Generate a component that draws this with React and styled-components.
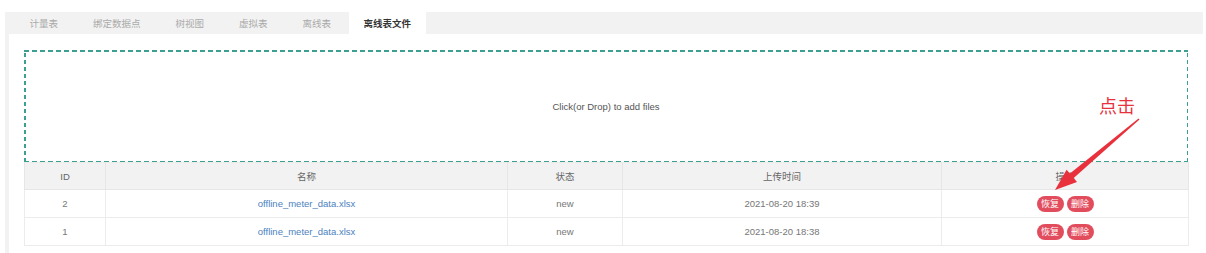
import React from "react";
import styled, { createGlobalStyle } from "styled-components";

const GlobalStyle = createGlobalStyle`
  body {
    margin: 0;
    background: #fff;
    font-family: "Liberation Sans", "Noto Sans CJK SC", sans-serif;
  }
`;

const tabs = ["计量表", "绑定数据点", "树视图", "虚拟表", "离线表", "离线表文件"];

const files = [
  { id: 2, name: "offline_meter_data.xlsx", status: "new", time: "2021-08-20 18:39" },
  { id: 1, name: "offline_meter_data.xlsx", status: "new", time: "2021-08-20 18:38" },
];

const columns = [
  { title: "ID", width: 81 },
  { title: "名称", width: 402 },
  { title: "状态", width: 115 },
  { title: "上传时间", width: 319 },
  { title: "操作", width: 247 },
];

const App = () => {
  return (
    <>
      <GlobalStyle />
      <Page>
        <TabBar>
          {tabs.map((t, i) => (
            <Tab key={t} active={i === tabs.length - 1}>
              {t}
            </Tab>
          ))}
        </TabBar>
        <Panel>
          <DropZone>Click(or Drop) to add files</DropZone>
          <Table>
            <colgroup>
              {columns.map((c) => (
                <col key={c.title} style={{ width: c.width }} />
              ))}
            </colgroup>
            <thead>
              <tr>
                {columns.map((c) => (
                  <Th key={c.title}>{c.title}</Th>
                ))}
              </tr>
            </thead>
            <tbody>
              {files.map((f) => (
                <tr key={f.id}>
                  <Td>{f.id}</Td>
                  <Td>
                    <FileLink>{f.name}</FileLink>
                  </Td>
                  <Td>{f.status}</Td>
                  <Td>{f.time}</Td>
                  <Td>
                    <Actions>
                      <PillButton>恢复</PillButton>
                      <PillButton>删除</PillButton>
                    </Actions>
                  </Td>
                </tr>
              ))}
            </tbody>
          </Table>
        </Panel>
        <Annotation>
          <Note>点击</Note>
          <svg width="100" height="90" viewBox="0 0 100 90">
            <polygon
              points="84.5,0.4 85.5,1.6 19.7,60.1 23,63.9 1,72 12.6,51.7 15.9,55.5"
              fill="#e8313c"
            />
          </svg>
        </Annotation>
      </Page>
    </>
  );
};

const Page = styled.div`
  position: relative;
  padding: 12px 3px 0 5px;
  height: 253px;
  box-sizing: border-box;
`;

const TabBar = styled.div`
  display: flex;
  height: 22px;
  padding-left: 7px;
  background: #f2f2f2;
`;

const Tab = styled.div`
  display: flex;
  align-items: center;
  padding: 0 ${(p) => (p.active ? "15px" : "17.5px")};
  font-size: 9.5px;
  font-weight: ${(p) => (p.active ? 700 : 400)};
  color: ${(p) => (p.active ? "#333" : "#aaa")};
  background: ${(p) => (p.active ? "#fff" : "transparent")};
`;

const Panel = styled.div`
  display: flex;
  flex-direction: column;
  padding: 16px 15px 0 15px;
  border-left: 4px solid #f2f2f2;
  background: #fff;
  height: 219px;
  box-sizing: border-box;
`;

const dash = "#3d9e92";

const DropZone = styled.div`
  display: flex;
  align-items: center;
  justify-content: center;
  height: 112px;
  font-size: 9.5px;
  color: #555;
  background:
    linear-gradient(90deg, ${dash} 62%, transparent 0) top left / 8px 1.5px repeat-x,
    linear-gradient(90deg, ${dash} 62%, transparent 0) bottom left / 8px 1.5px repeat-x,
    linear-gradient(0deg, ${dash} 60%, transparent 0) top left / 1.5px 7px repeat-y,
    linear-gradient(0deg, ${dash} 60%, transparent 0) top right / 1.5px 7px repeat-y;
`;

const Table = styled.table`
  width: 1164px;
  border-collapse: collapse;
  table-layout: fixed;
  font-size: 9.5px;
  border: 1px solid #ececec;
`;

const Th = styled.th`
  height: 26px;
  padding: 0;
  background: #f2f2f2;
  color: #666;
  font-weight: 400;
  border: 1px solid #e6e6e6;
  border-top: none;
`;

const Td = styled.td`
  height: 27px;
  padding: 0;
  text-align: center;
  color: #777;
  border: 1px solid #ececec;
`;

const FileLink = styled.span`
  color: #4b82c0;
`;

const Actions = styled.div`
  display: flex;
  justify-content: center;
  gap: 3px;
`;

const PillButton = styled.span`
  display: inline-flex;
  align-items: center;
  justify-content: center;
  width: 27px;
  height: 16px;
  border-radius: 8px;
  background: #e24d5e;
  color: #fff;
  font-size: 9px;
`;

const Annotation = styled.div`
  position: absolute;
  left: 1054px;
  top: 94px;
  width: 100px;
  height: 100px;
  pointer-events: none;

  svg {
    position: absolute;
    left: 0;
    top: 24px;
  }
`;

const Note = styled.div`
  position: absolute;
  left: 45px;
  top: 0;
  font-size: 18px;
  line-height: 22px;
  color: #e8313c;
  font-family: "Noto Sans CJK SC", sans-serif;
`;

export default App;
